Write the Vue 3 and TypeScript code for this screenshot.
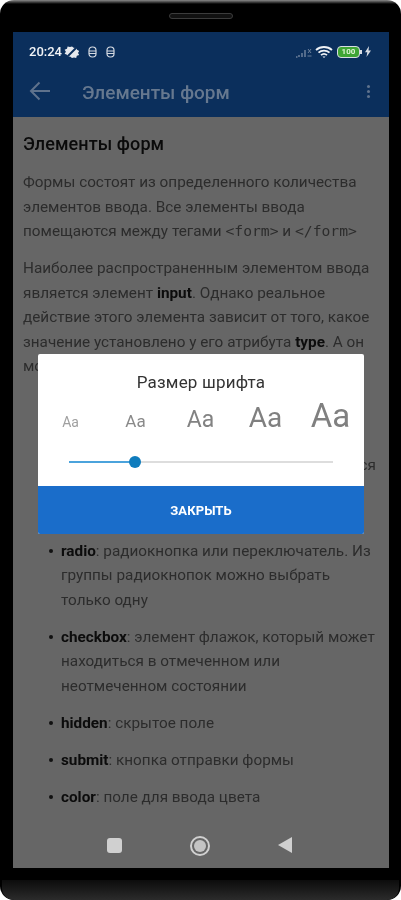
<script setup lang="ts">
const samples = [
  { size: 14, color: '#a0a0a0' },
  { size: 17, color: '#8a8a8a' },
  { size: 23, color: '#828282' },
  { size: 28, color: '#808080' },
  { size: 33, color: '#808080' },
]
</script>

<template>
  <div class="phone">
    <div class="speaker"></div>
    <div class="screen">
      <div class="status">
        <span class="time">20:24</span>
        <svg class="gear" width="18" height="14" viewBox="0 0 18 14">
          <path d="M9 1.500l2 1.500 2.500-.5.5 2.300 2.200 1.200-1.200 2 1.200 2-2.400.8-.6 2.200-2.200-.5L9 13l-2-1.500-2.500.5-.5-2.300-2.400-1 1.300-2-1.300-2 2.400-.9.6-2.300 2.400.5z" fill="#e6e9ee" />
          <path d="M4 12L14 2" stroke="#0b2f5c" stroke-width="2" />
        </svg>
        <svg class="mouse first" width="9" height="12" viewBox="0 0 9 12">
          <rect x="1" y="1" width="7" height="10" rx="3.200" fill="none" stroke="#d5dae2" stroke-width="1.200" />
          <path d="M1 5h7M1 7.500h7" stroke="#d5dae2" stroke-width="1" />
        </svg>
        <svg class="mouse" width="9" height="12" viewBox="0 0 9 12">
          <rect x="1" y="1" width="7" height="10" rx="3.200" fill="none" stroke="#d5dae2" stroke-width="1.200" />
          <path d="M1 5h7M1 7.500h7" stroke="#d5dae2" stroke-width="1" />
        </svg>
        <span class="spacer"></span>
        <svg width="17" height="12" viewBox="0 0 17 12">
          <path d="M1 11h1.500M4 11V9M7 11V7M10 11V4" stroke="#6d809b" stroke-width="1.500" />
          <path d="M13 3l3 4M16 3l-3 4M12.500 10h4" stroke="#6d809b" stroke-width="1" />
        </svg>
        <svg class="wifi" width="18" height="14" viewBox="0 0 18 14">
          <path d="M1 5c4.500-4 11.500-4 16 0M3.500 7.700c3-2.700 8-2.700 11 0M6 10.200c1.700-1.500 4.300-1.500 6 0" fill="none" stroke="#eef1f5" stroke-width="1.800" />
          <path d="M7.500 11.500L9 13l1.500-1.500z" fill="#eef1f5" />
        </svg>
        <div class="battery"><span>100</span></div>
        <i class="cap"></i>
        <svg class="bolt" width="6" height="11" viewBox="0 0 6 11">
          <path d="M4 0L0 6.200h2.300L1.500 11 6 4.500H3.500z" fill="#d8dde4" />
        </svg>
      </div>
      <div class="appbar">
        <svg class="back" width="22" height="20" viewBox="0 0 22 20">
          <path d="M21 10H2M10.500 1.500L2 10l8.500 8.500" fill="none" stroke="#5f728c" stroke-width="2" />
        </svg>
        <span class="bar-title">Элементы форм</span>
        <span class="spacer"></span>
        <div class="dots"><i></i><i></i><i></i></div>
      </div>
      <div class="content">
        <h1>Элементы форм</h1>
        <p>Формы состоят из определенного количества элементов ввода. Все элементы ввода помещаются между тегами <code>&lt;form&gt;</code> и <code>&lt;/form&gt;</code></p>
        <p>Наиболее распространенным элементом ввода является элемент <b>input</b>. Однако реальное действие этого элемента зависит от того, какое значение установлено у его атрибута <b>type</b>. А он может принимать следующие значения:</p>
        <ul>
          <li><b>text</b>: обычное текстовое поле</li>
          <li><b>password</b>: тоже текстовое поле, только<br />вместо вводимых символов отображаются<br />звездочки, поэтому в основном<br />используется для ввода пароля</li>
          <li><b>radio</b>: радиокнопка или переключатель. Из группы радиокнопок можно выбрать только одну</li>
          <li><b>checkbox</b>: элемент флажок, который может находиться в отмеченном или неотмеченном состоянии</li>
          <li><b>hidden</b>: скрытое поле</li>
          <li><b>submit</b>: кнопка отправки формы</li>
          <li><b>color</b>: поле для ввода цвета</li>
        </ul>
      </div>
      <div class="navbar">
        <i class="nav-square"></i>
        <i class="nav-circle"></i>
        <i class="nav-back"></i>
      </div>
      <div class="dialog">
        <div class="dialog-title">Размер шрифта</div>
        <div class="samples">
          <span v-for="s in samples" :key="s.size" :style="{ fontSize: s.size + 'px', color: s.color }">Aa</span>
        </div>
        <div class="slider">
          <div class="fill"></div>
          <div class="thumb"></div>
        </div>
        <button class="close" type="button">ЗАКРЫТЬ</button>
      </div>
    </div>
    <div class="chin"></div>
  </div>
</template>

<style>
body {
  background: #fff;
}
</style>

<style scoped>
.phone {
  width: 401px;
  height: 900px;
  box-sizing: border-box;
  padding-top: 32px;
  background: linear-gradient(#8a8a8a 0, #000 4px);
  border-radius: 14px;
  position: relative;
  font-family: Roboto, "Noto Sans", sans-serif;
  overflow: hidden;
  filter: blur(0.6px);
}

.speaker {
  position: absolute;
  top: 13px;
  left: 169px;
  width: 64px;
  height: 6px;
  box-sizing: border-box;
  border: 1px solid #3c3c3c;
  border-radius: 3px;
  background: #111;
}

.screen {
  position: relative;
  width: 376px;
  height: 836px;
  margin-left: 13px;
  background: #666;
  display: flex;
  flex-direction: column;
  overflow: hidden;
}

.status {
  height: 36px;
  flex: none;
  display: flex;
  align-items: center;
  padding: 3px 18px 0 16px;
  box-sizing: border-box;
  background: #0b2f5c;
}

.time {
  font-size: 13px;
  font-weight: 500;
  color: #f2f4f7;
}

.gear {
  margin-left: 1px;
}

.mouse {
  margin-left: 9px;
}

.mouse.first {
  margin-left: 7px;
}

.spacer {
  flex: 1;
}

.wifi {
  margin-left: 3px;
}

.battery {
  width: 23px;
  height: 12px;
  margin-left: 4px;
  box-sizing: border-box;
  border: 1.500px solid #d8dde4;
  border-radius: 4px;
  background: #3fa535;
  display: flex;
  align-items: center;
  justify-content: center;
}

.battery span {
  font-size: 8px;
  font-weight: 700;
  color: #dff5d5;
}

.cap {
  width: 2px;
  height: 4px;
  background: #d8dde4;
}

.bolt {
  margin-left: 3px;
}

.appbar {
  height: 49px;
  flex: none;
  display: flex;
  align-items: center;
  padding: 0 19px 0 16px;
  box-sizing: border-box;
  background: #0b2f5c;
}

.back {
  margin-top: -3px;
}

.bar-title {
  margin-left: 31px;
  font-size: 19px;
  font-weight: 500;
  color: #66788f;
}

.dots {
  display: flex;
  flex-direction: column;
  gap: 2px;
  margin-top: -3px;
}

.dots i {
  width: 3px;
  height: 3px;
  border-radius: 50%;
  background: #5f728c;
}

.content {
  flex: 1;
  min-height: 0;
  padding: 0 11px 0 10px;
  overflow: hidden;
}

h1 {
  margin: 16px 0 0;
  font-size: 18px;
  line-height: 22px;
  font-weight: 500;
  letter-spacing: 0.1px;
  color: #0a0a0a;
}

p {
  margin: 12.500px 0 0;
  font-size: 15.300px;
  line-height: 24.500px;
  color: #2c2c2c;
}

h1 + p {
  margin-top: 15px;
}

code {
  font-family: "DejaVu Sans Mono", monospace;
  font-size: 14.700px;
}

b {
  font-weight: 700;
  color: #0c0c0c;
}

ul {
  margin: 12.500px 0 0;
  padding: 0 0 0 38px;
  list-style: none;
}

li {
  position: relative;
  margin-bottom: 12.500px;
  font-size: 15.300px;
  line-height: 24.500px;
  color: #2c2c2c;
}

li::before {
  content: "";
  position: absolute;
  left: -12px;
  top: 10px;
  width: 4px;
  height: 4px;
  border-radius: 50%;
  background: #111;
}

.navbar {
  height: 48px;
  flex: none;
  background: #666;
  position: relative;
}

.nav-square {
  position: absolute;
  left: 94px;
  top: 18px;
  width: 15px;
  height: 15px;
  border-radius: 3px;
  background: #d0d0d0;
}

.nav-circle {
  position: absolute;
  left: 177px;
  top: 16px;
  width: 20px;
  height: 20px;
  box-sizing: border-box;
  border: 2px solid #d0d0d0;
  border-radius: 50%;
}

.nav-circle::after {
  content: "";
  position: absolute;
  left: 2px;
  top: 2px;
  width: 12px;
  height: 12px;
  border-radius: 50%;
  background: #c4c4c4;
}

.nav-back {
  position: absolute;
  left: 265px;
  top: 17px;
  width: 0;
  height: 0;
  border-top: 8px solid transparent;
  border-bottom: 8px solid transparent;
  border-right: 14px solid #d0d0d0;
}

.dialog {
  position: absolute;
  left: 25px;
  top: 322px;
  width: 326px;
  height: 180px;
  background: #fff;
  border-radius: 2px;
  display: flex;
  flex-direction: column;
  overflow: hidden;
}

.dialog-title {
  margin-top: 17px;
  font-size: 17px;
  line-height: 22px;
  letter-spacing: 0.2px;
  text-align: center;
  color: #333;
}

.samples {
  display: grid;
  grid-template-columns: repeat(5, 65px);
  margin-top: 5px;
  height: 36px;
  align-items: baseline;
  justify-items: center;
  line-height: 36px;
}

.slider {
  position: relative;
  height: 2px;
  margin: 27px 31px 0;
  background: #ddd;
}

.fill {
  width: 66px;
  height: 2px;
  background: #4ba3dc;
}

.thumb {
  position: absolute;
  left: 60px;
  top: -5px;
  width: 12px;
  height: 12px;
  border-radius: 50%;
  background: #0f7cbd;
}

.close {
  margin-top: auto;
  height: 48px;
  border: 0;
  padding: 0;
  background: #1a6dca;
  color: #fff;
  font-family: inherit;
  font-size: 13px;
  font-weight: 700;
  letter-spacing: 0.1px;
}

.chin {
  position: absolute;
  left: 2px;
  right: 2px;
  top: 880px;
  height: 20px;
  border-radius: 0 0 12px 12px;
  background: linear-gradient(#0c0c0c, #2b2b2b);
}
</style>
